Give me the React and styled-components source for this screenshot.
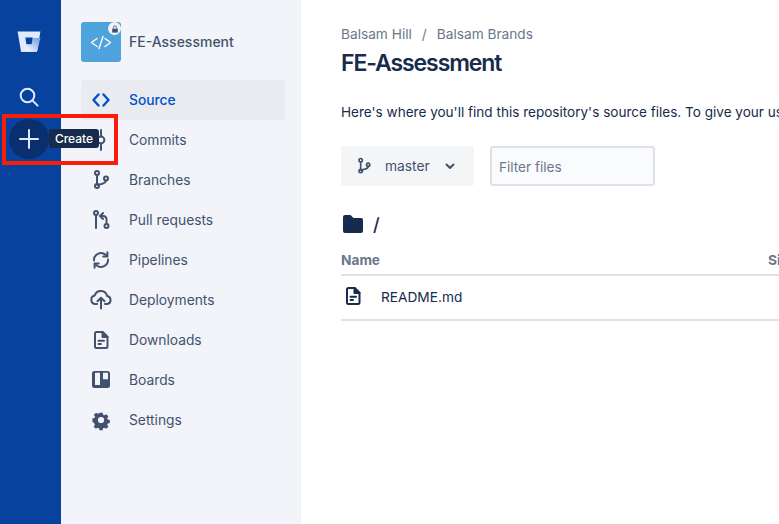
import React from "react";
import styled, { createGlobalStyle } from "styled-components";

const Global = createGlobalStyle`
  html, body { margin: 0; padding: 0; height: 100%; overflow: hidden; background: #fff; }
  body { font-family: Inter, "Noto Sans", "Liberation Sans", sans-serif; }
  #root { height: 100%; }
`;

const Page = styled.div`
  position: relative;
  display: flex;
  width: 779px;
  height: 524px;
  overflow: hidden;
`;

const GlobalNav = styled.nav`
  flex: 0 0 61px;
  background: #07429f;
  display: flex;
  flex-direction: column;
  align-items: center;
  padding-top: 22px;
  box-sizing: border-box;
`;

const NavSlot = styled.div`
  width: 40px;
  height: 40px;
  margin-left: -3px;
  margin-top: ${(p) => p.$top || 0}px;
  border-radius: 50%;
  display: flex;
  align-items: center;
  justify-content: center;
  background: ${(p) => (p.$active ? "#0a2f6e" : "transparent")};
`;

const SideBar = styled.aside`
  flex: 0 0 240px;
  background: #f2f4f9;
  box-sizing: border-box;
  padding: 22px 16px 0 20px;
`;

const RepoHead = styled.div`
  display: flex;
  align-items: center;
  gap: 8px;
  height: 40px;
  margin-bottom: 18px;
`;

const RepoAvatar = styled.div`
  position: relative;
  width: 40px;
  height: 40px;
  border-radius: 3px;
  background: #4fa3dc;
  display: flex;
  align-items: center;
  justify-content: center;
`;

const LockBadge = styled.div`
  position: absolute;
  top: 0;
  right: 0;
  width: 13px;
  height: 13px;
  border-radius: 50%;
  background: #f2f4f9;
  display: flex;
  align-items: center;
  justify-content: center;
`;

const RepoName = styled.div`
  margin-top: -1px;
  font-size: 14px;
  font-weight: 500;
  color: #42526e;
`;

const Item = styled.div`
  height: 40px;
  display: flex;
  align-items: center;
  border-radius: 3px;
  background: ${(p) => (p.$active ? "#e9ebf0" : "transparent")};
  color: ${(p) => (p.$active ? "#0052cc" : "#42526e")};
  font-size: 13.8px;
  font-weight: ${(p) => (p.$active ? 500 : 400)};
`;

const ItemIcon = styled.span`
  flex: 0 0 40px;
  display: flex;
  justify-content: center;
  align-items: center;
  color: inherit;
`;

const ItemLabel = styled.span`
  margin: 0 0 0 8px;
`;

const Main = styled.main`
  flex: 1;
  min-width: 0;
  padding: 25px 0 0 40px;
`;

const Crumbs = styled.div`
  display: flex;
  gap: 10px;
  font-size: 13.7px;
  line-height: 18px;
  color: #6b778c;
`;

const Title = styled.h1`
  margin: 5px 0 0;
  font-size: 23px;
  line-height: 30px;
  font-weight: 600;
  letter-spacing: -1.1px;
  color: #172b4d;
`;

const Intro = styled.p`
  margin: 24px 0 0;
  font-size: 13.55px;
  line-height: 20px;
  color: #172b4d;
  white-space: nowrap;
`;

const Controls = styled.div`
  display: flex;
  gap: 16px;
  margin-top: 24px;
`;

const BranchButton = styled.div`
  width: 133px;
  height: 40px;
  box-sizing: border-box;
  padding-left: 13px;
  background: #f4f5f7;
  border-radius: 3px;
  display: flex;
  align-items: center;
  font-size: 13.8px;
  color: #42526e;
`;

const BranchLabel = styled.span`
  margin: 0 14px 0 11px;
`;

const FilterBox = styled.div`
  width: 165px;
  height: 40px;
  box-sizing: border-box;
  border: 2px solid #dfe1e6;
  border-radius: 3px;
  background: #fafbfc;
  padding: 2px 0 0 7px;
  display: flex;
  align-items: center;
  font-size: 13.6px;
  color: #6b778c;
`;

const PathRow = styled.div`
  display: flex;
  align-items: center;
  gap: 10px;
  margin-top: 26px;
  height: 24px;
  font-size: 18px;
  font-weight: 500;
  color: #172b4d;
`;

const HeadRow = styled.div`
  display: grid;
  grid-template-columns: 427px 1fr;
  height: 27px;
  margin-top: 13px;
  box-sizing: border-box;
  padding-top: 3px;
  border-bottom: 2px solid #dfe1e6;
  font-size: 13.7px;
  font-weight: 700;
  color: #6b778c;
`;

const FileRow = styled.div`
  display: flex;
  align-items: center;
  height: 45px;
  box-sizing: border-box;
  border-bottom: 2px solid #dfe1e6;
  font-size: 13.7px;
  color: #172b4d;
`;

const FileLabel = styled.span`
  margin-top: -2px;
`;

const FileIcon = styled.span`
  flex: 0 0 40px;
  display: flex;
  margin-top: -3px;
`;

const Highlight = styled.div`
  position: absolute;
  left: 2px;
  top: 114px;
  width: 116px;
  height: 51px;
  box-sizing: border-box;
  border: 4px solid #fa1e0a;
  pointer-events: none;
`;

const Tip = styled.div`
  position: absolute;
  left: 49px;
  top: 129px;
  height: 19px;
  width: 50px;
  justify-content: center;
  box-sizing: border-box;
  border-radius: 3px;
  background: #172b4d;
  color: #fff;
  font-size: 12px;
  font-weight: 500;
  display: flex;
  align-items: center;
`;

const S = ({ children, size = 24, fill = "none", stroke = "currentColor", sw = 2 }) => (
  <svg width={size} height={size} viewBox="0 0 24 24" fill={fill} stroke={stroke} strokeWidth={sw} strokeLinecap="round" strokeLinejoin="round">
    {children}
  </svg>
);

const BucketLogo = () => (
  <svg width="24" height="24" viewBox="0 0 24 24">
    <defs>
      <linearGradient id="bk" x1="1" y1="0.25" x2="0.35" y2="0.8">
        <stop offset="0" stopColor="#7ea6df" />
        <stop offset="1" stopColor="#e8effa" />
      </linearGradient>
    </defs>
    <path d="M0.6 1.5h22.8l-3.2 19.4a1 1 0 0 1-1 .9H4.9a1 1 0 0 1-1-.9z" fill="#deebff" />
    <path d="M23.4 8H15.6l-1.2 7.2H9.4l-5.6 6.3c.3.2.6.3 1 .3H19.2a1 1 0 0 0 1-.9z" fill="url(#bk)" />
    <path d="M8.3 7.6h7.4l-1 6.6H9.4z" fill="#07429f" />
  </svg>
);

const SearchIcon = () => (
  <S stroke="#deebff">
    <circle cx="10.5" cy="10.5" r="6.8" />
    <path d="M15.6 15.6l5 5" />
  </S>
);

const PlusIcon = () => (
  <S stroke="#deebff">
    <path d="M12 3v18M3 12h18" />
  </S>
);

const CodeIcon = () => (
  <S sw={2.4}>
    <path d="M9.5 6.5L4.5 12l5 5.5M14.5 6.5l5 5.5-5 5.5" />
  </S>
);

const CommitIcon = () => (
  <S>
    <path d="M12 2v6.5M12 15.5V22" />
    <circle cx="12" cy="12" r="3.4" />
  </S>
);

const BranchGlyph = () => (
  <>
    <circle cx="8" cy="5" r="2" />
    <circle cx="8" cy="18" r="2" />
    <circle cx="17" cy="10.5" r="2" />
    <path d="M8 7v9M17 12.5c0 2.4-2.6 2.9-5 3.6-1.6.5-3 .7-3.6.9" />
  </>
);

const BranchIcon = () => <S><BranchGlyph /></S>;

const PullIcon = () => (
  <S>
    <circle cx="7" cy="5" r="2" />
    <path d="M7 7v13" />
    <circle cx="17.5" cy="18" r="2" />
    <path d="M17.5 16v-4.5c0-2.4-1.3-3.5-3.5-3.5h-2M14 5l-3 3 3 3" />
  </S>
);

const PipelineIcon = () => (
  <S>
    <path d="M5 12.5a7 7 0 0 1 11.6-5.7l1.4 1.3M19 11.5a7 7 0 0 1-11.6 5.7L6 15.9" />
    <path d="M18.4 4.2v4.2h-4.2M5.6 19.8v-4.2h4.2" />
  </S>
);

const CloudIcon = () => (
  <S>
    <path d="M8 16H6.4A4.3 4.3 0 0 1 5.7 7.5a6.4 6.4 0 0 1 12.4.6 4 4 0 0 1 .1 7.9H16" />
    <path d="M12 20.5V10M8.5 13.2L12 9.7l3.5 3.5" />
  </S>
);

const DocIcon = () => (
  <S>
    <path d="M7.500 4h6.300L18.500 8.700V18.500a1.500 1.500 0 0 1-1.500 1.500H7.500a1.500 1.500 0 0 1-1.500-1.500v-13A1.500 1.500 0 0 1 7.500 4z" />
    <path d="M13.500 4v5h5" fill="currentColor" />
    <path d="M9.500 12.800h5.500M9.500 16h2.500" />
  </S>
);

const BoardIcon = () => (
  <svg width="24" height="24" viewBox="0 0 24 24">
    <path
      fillRule="evenodd"
      fill="currentColor"
      d="M5.500 3h13A2.500 2.500 0 0 1 21 5.500v12a2.500 2.500 0 0 1-2.500 2.500h-13A2.500 2.500 0 0 1 3 17.500v-12A2.500 2.500 0 0 1 5.500 3zm.5 1.800V17h5V4.800zm8 0v6.500h5V4.800z"
    />
  </svg>
);

const GearIcon = () => (
  <svg width="24" height="24" viewBox="0 0 24 24">
    <path
      fillRule="evenodd"
      fill="currentColor"
      d="M10 2.600h4l.6 2.700 1.700.7 2.300-1.500 2.800 2.800-1.500 2.300.7 1.700 2.700.6v4l-2.700.6-.7 1.700 1.500 2.300-2.800 2.800-2.300-1.500-1.700.7-.6 2.700h-4l-.6-2.700-1.700-.7-2.300 1.500-2.800-2.800 1.500-2.300-.7-1.700L.9 14V10l2.700-.6.7-1.700L2.800 5.400l2.800-2.800 2.300 1.500 1.700-.7zM12 8a4 4 0 1 0 0 8 4 4 0 0 0 0-8z"
      transform="translate(12 12) scale(.78) translate(-11.950 -12)"
    />
  </svg>
);

const items = [
  ["Source", CodeIcon],
  ["Commits", CommitIcon],
  ["Branches", BranchIcon],
  ["Pull requests", PullIcon],
  ["Pipelines", PipelineIcon],
  ["Deployments", CloudIcon],
  ["Downloads", DocIcon],
  ["Boards", BoardIcon],
  ["Settings", GearIcon],
];

export default function App() {
  return (
    <Page>
      <Global />
      <GlobalNav>
        <NavSlot><BucketLogo /></NavSlot>
        <NavSlot $top={15}><SearchIcon /></NavSlot>
        <NavSlot $active $top={2}><PlusIcon /></NavSlot>
      </GlobalNav>
      <SideBar>
        <RepoHead>
          <RepoAvatar>
            <svg width="24" height="24" viewBox="0 0 24 24" fill="none" stroke="#fff" strokeWidth="1.400" strokeLinecap="round" strokeLinejoin="round">
              <path d="M8 8.500l-5.500 4 5.500 4M16 8.500l5.500 4-5.500 4M14 6.500l-4 12" />
            </svg>
            <LockBadge>
              <svg width="8" height="8" viewBox="0 0 10 10">
                <path d="M1.500 4.500h7v5h-7z" fill="#42526e" />
                <path d="M3 4.500V3a2 2 0 0 1 4 0v1.500" fill="none" stroke="#42526e" />
              </svg>
            </LockBadge>
          </RepoAvatar>
          <RepoName>FE-Assessment</RepoName>
        </RepoHead>
        {items.map(([label, Icon], i) => (
          <Item key={label} $active={i === 0}>
            <ItemIcon><Icon /></ItemIcon>
            <ItemLabel>{label}</ItemLabel>
          </Item>
        ))}
      </SideBar>
      <Main>
        <Crumbs>
          <span>Balsam Hill</span>
          <span>/</span>
          <span>Balsam Brands</span>
        </Crumbs>
        <Title>FE-Assessment</Title>
        <Intro>Here's where you'll find this repository's source files. To give your users an idea of what they'll find here</Intro>
        <Controls>
          <BranchButton>
            <S size={20}><BranchGlyph /></S>
            <BranchLabel>master</BranchLabel>
            <svg width="12" height="12" viewBox="0 0 12 12" fill="none" stroke="#42526e" strokeWidth="2" strokeLinecap="round" strokeLinejoin="round">
              <path d="M2.500 4.500L6 8l3.500-3.500" />
            </svg>
          </BranchButton>
          <FilterBox>Filter files</FilterBox>
        </Controls>
        <PathRow>
          <svg width="22" height="24" viewBox="0 0 22 24">
            <path d="M4 3h5.500l3 3H20a2 2 0 0 1 2 2v11a2 2 0 0 1-2 2H4a2 2 0 0 1-2-2V5a2 2 0 0 1 2-2z" fill="#172b4d" />
          </svg>
          <span>/</span>
        </PathRow>
        <HeadRow>
          <span>Name</span>
          <span>Size</span>
        </HeadRow>
        <FileRow>
          <FileIcon><DocIcon /></FileIcon>
          <FileLabel>README.md</FileLabel>
        </FileRow>
      </Main>
      <Highlight />
      <Tip>Create</Tip>
    </Page>
  );
}
